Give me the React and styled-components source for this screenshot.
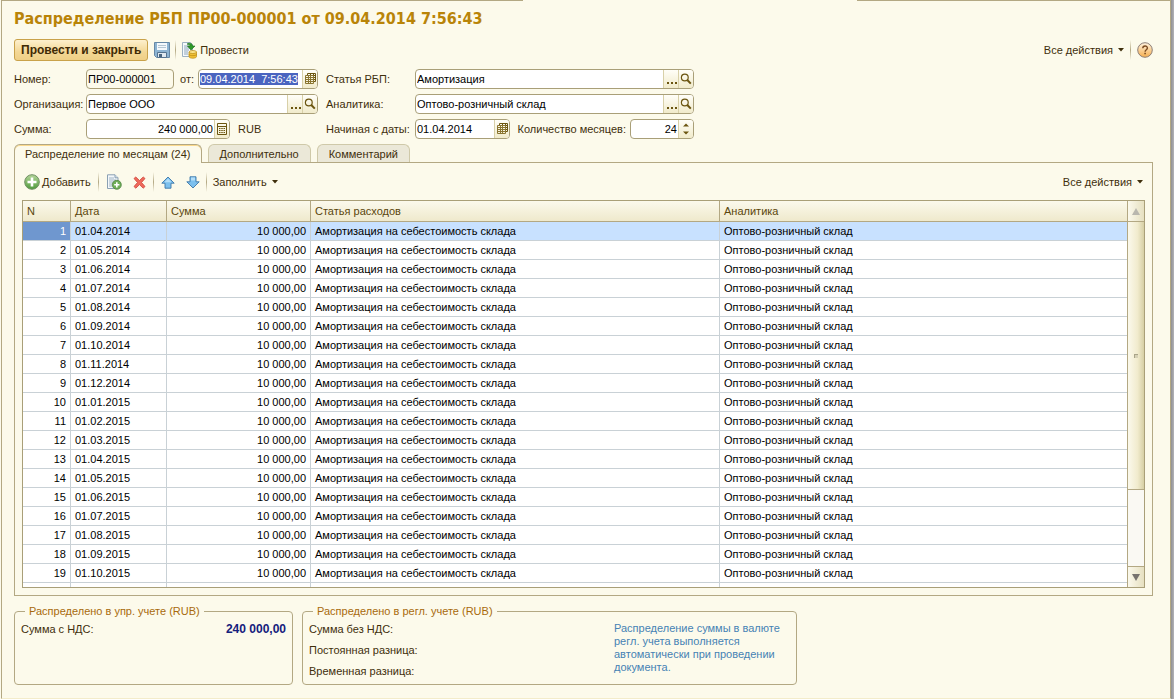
import { useEffect, useRef } from 'react'
import styled, { createGlobalStyle } from 'styled-components'

const GlobalStyle = createGlobalStyle`
* { box-sizing: border-box; }
body {
  margin: 0;
  background-color: #fcfaeb;
}
body, button, input, table {
  font-family: 'Liberation Sans', Arial, sans-serif;
  font-size: 11px;
  color: #3f2f0c;
}
`

const Window = styled.div`
display: flex;
height: 100vh;
min-width: 820px;
padding-left: 1px;
background-color: #fcfaeb;
`

const Page = styled.main`
flex: 1;
min-width: 0;
display: flex;
flex-direction: column;
padding: 0 17px 13px 12px;
border-left: 1px solid #b3a883;
border-right: 1px solid #b3a883;
border-bottom: 1px solid #f3eccb;
`

const Shadow = styled.div`
width: 3px;
background: linear-gradient(to right, #8f8f93, #b4b4b8);
`

const TopEdge = styled.div`
display: flex;
justify-content: space-between;
height: 1px;
margin: 0 -17px 0 -13px;
`

const Edge = styled.span`
width: ${({ side }) => (side === 'left' ? '522px' : '313px')};
background-color: #b3a883;
`

const Title = styled.h1`
margin: 8px 0 10px;
font-family: 'DejaVu Sans Condensed', Tahoma, sans-serif;
font-size: 16px;
line-height: 20px;
font-weight: bold;
color: #b98408;
`

const Toolbar = styled.div`
display: flex;
align-items: center;
height: 22px;
`

const Spacer = styled.div`
flex: 1;
`

const MainButton = styled.button`
height: 22px;
margin-right: 6px;
padding: 0 6px;
border: 1px solid #c9a24a;
border-radius: 3px;
background: linear-gradient(#fdf0cd, #f3d794 60%, #efcf86);
font-size: 12px;
font-weight: bold;
color: #3f2a05;
`

const ToolButton = styled.button`
display: flex;
align-items: center;
gap: 2px;
padding: 0;
border: none;
background: none;
white-space: nowrap;
svg { display: block; }
`

const MenuButton = styled(ToolButton)`
gap: 5px;
`

const IconGroup = styled.div`
display: flex;
align-items: center;
gap: 11px;
`

const Separator = styled.span`
width: 1px;
height: 20px;
margin: 0 ${({ gap }) => gap || 6}px;
background: linear-gradient(#fcfaeb, #b3a883 50%, #fcfaeb);
`

const Form = styled.form`
display: grid;
grid-template-columns: 72px 232px 97px 279px;
row-gap: 5px;
align-items: center;
margin-top: 8px;
`

const Label = styled.label`
white-space: nowrap;
padding-left: ${({ indent }) => (indent ? 8 : 0)}px;
`

const FieldGroup = styled.div`
display: flex;
align-items: center;
justify-content: ${({ spread }) => (spread ? 'space-between' : 'flex-start')};
gap: ${({ gap }) => gap || 0}px;
`

const Field = styled.div`
display: flex;
width: ${({ width }) => (width ? `${width}px` : '100%')};
height: 20px;
overflow: hidden;
border: 1px solid #a99f78;
border-radius: 4px;
background-color: ${({ plain }) => (plain ? '#fcfaeb' : '#ffffff')};
`

const Input = styled.input`
flex: 1;
width: 0;
min-width: 0;
padding: 0 1px;
border: none;
outline: none;
background: none;
color: #000;
text-align: ${({ right }) => (right ? 'right' : 'left')};
&::selection {
  background-color: #4a64c0;
  color: #ffffff;
}
`

const FieldButton = styled.button`
display: flex;
align-items: center;
justify-content: center;
width: 15px;
padding: 0;
border: none;
border-left: 1px solid #d8d0a8;
background: linear-gradient(#fffef8, #f1ebcb);
svg { display: block; }
`

const Tabs = styled.div`
display: flex;
align-items: flex-end;
gap: 6px;
height: 19px;
margin: 5px 0 -1px;
z-index: 1;
`

const Tab = styled.button`
height: ${({ active }) => (active ? 19 : 18)}px;
margin-bottom: ${({ active }) => (active ? 0 : 1)}px;
padding: 0 ${({ active }) => (active ? 10 : 11)}px;
border: 1px solid ${({ active }) => (active ? '#b3a883' : '#cfc9a9')};
border-bottom: none;
border-radius: 6px 6px 0 0;
background-color: ${({ active }) => (active ? '#fcfaeb' : '#ebe8d8')};
box-shadow: ${({ active }) => (active ? 'inset 0 1px 0 #fbd98d' : 'none')};
white-space: nowrap;
`

const Panel = styled.section`
flex: 1;
min-height: 0;
display: flex;
flex-direction: column;
padding: 8px 7px 7px;
border: 1px solid #b3a883;
`

const PanelToolbar = styled(Toolbar)`
padding: 0 2px;
margin-bottom: 7px;
`

const Grid = styled.div`
flex: 1;
min-height: 0;
display: flex;
border: 1px solid #a99f78;
background-color: #ffffff;
`

const TableClip = styled.div`
flex: 1;
min-width: 0;
overflow: hidden;
`

const Table = styled.table`
width: 100%;
table-layout: fixed;
border-collapse: separate;
border-spacing: 0;
color: #000;
`

const HeadCell = styled.th`
width: ${({ width }) => (width ? `${width}px` : 'auto')};
height: 21px;
padding: 0 4px;
border-right: 1px solid #b3a883;
border-bottom: 1px solid #b3a883;
background: linear-gradient(#fbf9ec, #efe9cc);
font-weight: normal;
text-align: left;
color: #5a460c;
&:last-child { border-right: none; }
`

const Row = styled.tr`
background-color: ${({ selected }) => (selected ? '#c8e1ff' : '#ffffff')};
`

const Cell = styled.td`
height: 19px;
padding: 0 4px;
border-right: 1px solid #c9d1d6;
border-bottom: 1px solid #c9d1d6;
text-align: ${({ right }) => (right ? 'right' : 'left')};
white-space: nowrap;
&:last-child { border-right: none; }
`

const NumberCell = styled(Cell)`
text-align: right;
${({ selected }) => selected && 'background-color: #6f97cf; color: #ffffff;'}
`

const ScrollBar = styled.div`
display: flex;
flex-direction: column;
width: 17px;
border-left: 1px solid #b3a883;
background-color: #faf9f3;
`

const ScrollButton = styled.button`
display: flex;
align-items: center;
justify-content: center;
height: 21px;
padding: 0;
border: none;
background: linear-gradient(to right, #fbf9ec, #e6e0c0);
border-bottom: ${({ down }) => (down ? 'none' : '1px solid #b3a883')};
border-top: ${({ down }) => (down ? '1px solid #b3a883' : 'none')};
`

const ScrollTrack = styled.div`
flex: 1;
`

const ScrollThumb = styled.div`
display: flex;
align-items: center;
justify-content: center;
height: 78%;
border-bottom: 1px solid #b3a883;
background: linear-gradient(to right, #fbf9ec, #f1ebcd 60%, #d6cfa5);
`

const Grip = styled.span`
width: 4px;
height: 4px;
border-top: 1px solid #a9a489;
border-left: 1px solid #a9a489;
background-color: #d6d1b6;
`

const Totals = styled.div`
display: flex;
gap: 9px;
margin-top: 8px;
`

const Group = styled.fieldset`
display: flex;
justify-content: space-between;
width: ${({ width }) => width}px;
height: 81px;
margin: 0;
padding: 5px 6px 0;
border: 1px solid #b3a883;
border-radius: 4px;
`

const Legend = styled.legend`
margin-left: 4px;
padding: 0 4px;
line-height: 14px;
color: #a86a0c;
`

const Lines = styled.div`
display: flex;
flex-direction: column;
gap: 8px;
line-height: 13px;
`

const Amount = styled.output`
font-size: 12px;
line-height: 13px;
font-weight: bold;
color: #14207c;
`

const Note = styled.p`
width: 176px;
margin: -1px 0 0;
line-height: 13px;
color: #4682b4;
`

const Caret = () => (
    <svg width="6" height="4" viewBox="0 0 6 4"><path d="M0 0h6L3 3.5z" fill="#3f2f0c" /></svg>
)

const SaveIcon = () => (
    <svg width="16" height="16" viewBox="0 0 16 16">
        <path d="M.5 .5h15v15h-13l-2-2z" fill="#8db4d2" stroke="#6587a5" />
        <path d="M3 1h10v7H3z" fill="#f4f8fb" />
        <path d="M4 3.500h8M4 5.500h8" stroke="#b5c6d3" />
        <path d="M3.500 10.500h9v5h-9z" fill="#dfe9f0" stroke="#55738f" />
        <path d="M5 12h3v3H5z" fill="#48647e" />
    </svg>
)

const PostIcon = () => (
    <svg width="17" height="17" viewBox="0 0 17 17">
        <path d="M1.500 .5h8l2 2v12h-10z" fill="#f5f9fc" stroke="#9db1c2" />
        <path d="M3 4h5M3 6h6M3 8h5M3 10h4M3 12h4" stroke="#8ea6bb" />
        <path d="M6.500 1.500c3-.8 5 .2 5 2.500H14l-4 4-3.600-4H9c0-1.200-1-1.800-2.500-1.500z" fill="#2f9a2a" stroke="#1b6d1a" strokeWidth=".6" />
        <path d="M8 10v4.500c0 2.300 7.500 2.300 7.500 0V10z" fill="#f0c136" stroke="#b8860f" strokeWidth=".7" />
        <path d="M8 12.300c0 1.800 7.500 1.800 7.500 0" fill="none" stroke="#b8860f" strokeWidth=".7" />
        <ellipse cx="11.750" cy="10" rx="3.750" ry="1.500" fill="#fbe48a" stroke="#b8860f" strokeWidth=".7" />
    </svg>
)

const HelpIcon = () => (
    <svg width="16" height="16" viewBox="0 0 16 16">
        <defs>
            <linearGradient id="help" x1="0" y1="0" x2="0" y2="1">
                <stop offset="0" stopColor="#fff3df" />
                <stop offset="1" stopColor="#f6ae4e" />
            </linearGradient>
        </defs>
        <circle cx="8" cy="8" r="7.300" fill="url(#help)" stroke="#8d7f78" />
        <path d="M5.800 6.300c0-3 4.600-2.900 4.600-.3C10.400 7.800 8.100 7.600 8.100 9.700" fill="none" stroke="#7a4a20" strokeWidth="1.400" />
        <path d="M7.300 10.800h1.600v1.500H7.300z" fill="#7a4a20" />
    </svg>
)

const AddIcon = () => (
    <svg width="16" height="16" viewBox="0 0 16 16">
        <defs>
            <linearGradient id="add" x1="0" y1="0" x2="0" y2="1">
                <stop offset="0" stopColor="#b5d69a" />
                <stop offset="1" stopColor="#4f9a3c" />
            </linearGradient>
        </defs>
        <circle cx="8" cy="8" r="7.300" fill="url(#add)" stroke="#6f8f62" />
        <path d="M8 3.500v9M3.500 8h9" stroke="#ffffff" strokeWidth="2.600" />
    </svg>
)

const CopyIcon = () => (
    <svg width="16" height="16" viewBox="0 0 16 16">
        <path d="M1.500 .8h7.500l3 3v10.700H1.500z" fill="#f3f7fa" stroke="#8aa0b3" />
        <path d="M9 .8v3h3" fill="#d8e3ec" stroke="#8aa0b3" />
        <path d="M3 4h5M3 6h7M3 8h5M3 10h3M3 12h3" stroke="#9fb3c4" />
        <circle cx="10.800" cy="10.800" r="4.500" fill="#6fae58" stroke="#4d8140" strokeWidth=".8" />
        <path d="M10.800 8.200v5.200M8.200 10.800h5.200" stroke="#ffffff" strokeWidth="1.600" />
    </svg>
)

const DeleteIcon = () => (
    <svg width="13" height="13" viewBox="0 0 13 13">
        <path d="M1 2.500L2.800 1 6.500 4.500 10.200 1 12 2.500 8.500 6.500 12 10.500 10.200 12.200 6.500 8.600 2.800 12.200 1 10.500 4.500 6.500z" fill="#ee6a5c" stroke="#cf4238" strokeWidth=".8" />
    </svg>
)

const ArrowIcon = ({ down }) => (
    <svg width="14" height="13" viewBox="0 0 14 13">
        <path
            d={down ? 'M4 .8h6v5h3.200L7 12 .8 5.800H4z' : 'M4 12.200h6v-5h3.200L7 1 .8 7.200H4z'}
            fill="#7cc0ee"
            stroke="#3b76a8"
            strokeWidth=".9"
        />
        <path d={down ? 'M5 1.500h4v3H5z' : 'M7 2.500L3.500 6.200h7z'} fill="#b4def8" />
    </svg>
)

const CalendarIcon = () => (
    <svg width="11" height="12" viewBox="0 0 11 12">
        <path d="M2.500 2V.5h8v8H9" fill="none" stroke="#6b5510" />
        <path d="M5.500 1v1M8.500 1v2M9 2.500h1M9 4.500h1M9 6.500h1" stroke="#6b5510" />
        <path d="M.5 2.500h8v8h-8zM3.500 3v7M5.500 3v7M1 4.500h7M1 6.500h7M1 8.500h7" fill="none" stroke="#8a7530" />
    </svg>
)

const CalculatorIcon = () => (
    <svg width="10" height="12" viewBox="0 0 10 12">
        <path d="M.5 .5h9v11h-9zM1 3.500h8" fill="none" stroke="#6b5510" />
        <path d="M2 5.500h6M2 7.500h6M2 9.500h6" stroke="#6b5510" strokeDasharray="1.500 .75" />
    </svg>
)

const SearchIcon = () => (
    <svg width="12" height="12" viewBox="0 0 12 12">
        <circle cx="4.800" cy="4.500" r="3.400" fill="none" stroke="#6b5510" strokeWidth="1.200" />
        <path d="M7.300 7l3.500 3.600" stroke="#6b5510" strokeWidth="2" />
    </svg>
)

const DotsIcon = () => (
    <svg width="11" height="12" viewBox="0 0 11 12">
        <path d="M1 9h2v2H1zM5 9h2v2H5zM9 9h2v2H9z" fill="#6b5510" />
    </svg>
)

const SpinIcon = () => (
    <svg width="6" height="12" viewBox="0 0 6 12">
        <path d="M0 3.500L3 .5l3 3zM0 8.500l3 3 3-3z" fill="#6b5510" />
    </svg>
)

const ScrollArrow = ({ down }) => (
    <svg width="8" height="7" viewBox="0 0 8 7">
        <path d={down ? 'M0 0h8L4 7z' : 'M0 7h8L4 0z'} fill={down ? '#77736f' : '#b9b7ae'} />
    </svg>
)

// monthly split starts in April 2014
const rows = Array.from({ length: 19 }, (_, i) => {
    const month = String(((i + 3) % 12) + 1).padStart(2, '0')
    const year = 2014 + Math.floor((i + 3) / 12)
    return { n: i + 1, date: `01.${month}.${year}` }
})

const LookupField = ({ id, value }) => (
    <Field>
        <Input id={id} defaultValue={value} />
        <FieldButton type="button" aria-label="Выбрать"><DotsIcon /></FieldButton>
        <FieldButton type="button" aria-label="Открыть"><SearchIcon /></FieldButton>
    </Field>
)

const AllActions = () => (
    <MenuButton type="button">Все действия <Caret /></MenuButton>
)

const App = () => {

    const dateRef = useRef(null)

    useEffect(() => {
        dateRef.current.focus()
        dateRef.current.select()
    }, [])

    return (
        <Window>
            <GlobalStyle />
            <Page>
                <TopEdge><Edge side="left" /><Edge side="right" /></TopEdge>
                <Title>Распределение РБП ПР00-000001 от 09.04.2014 7:56:43</Title>

                <Toolbar>
                    <MainButton type="button">Провести и закрыть</MainButton>
                    <ToolButton type="button" aria-label="Записать"><SaveIcon /></ToolButton>
                    <Separator gap={5} />
                    <ToolButton type="button"><PostIcon />Провести</ToolButton>
                    <Spacer />
                    <AllActions />
                    <Separator />
                    <ToolButton type="button" aria-label="Справка"><HelpIcon /></ToolButton>
                </Toolbar>

                <Form>
                    <Label htmlFor="number">Номер:</Label>
                    <FieldGroup spread>
                        <Field width={88} plain><Input id="number" defaultValue="ПР00-000001" /></Field>
                        <FieldGroup gap={4}>
                            <Label htmlFor="date">от:</Label>
                            <Field width={120}>
                                <Input id="date" ref={dateRef} defaultValue="09.04.2014  7:56:43" />
                                <FieldButton type="button" aria-label="Календарь"><CalendarIcon /></FieldButton>
                            </Field>
                        </FieldGroup>
                    </FieldGroup>
                    <Label htmlFor="item" indent>Статья РБП:</Label>
                    <LookupField id="item" value="Амортизация" />

                    <Label htmlFor="org">Организация:</Label>
                    <LookupField id="org" value="Первое ООО" />
                    <Label htmlFor="analytics" indent>Аналитика:</Label>
                    <LookupField id="analytics" value="Оптово-розничный склад" />

                    <Label htmlFor="sum">Сумма:</Label>
                    <FieldGroup gap={8}>
                        <Field width={144}>
                            <Input id="sum" right defaultValue="240 000,00" />
                            <FieldButton type="button" aria-label="Калькулятор"><CalculatorIcon /></FieldButton>
                        </Field>
                        <span>RUB</span>
                    </FieldGroup>
                    <Label htmlFor="start" indent>Начиная с даты:</Label>
                    <FieldGroup spread>
                        <Field width={95}>
                            <Input id="start" defaultValue="01.04.2014" />
                            <FieldButton type="button" aria-label="Календарь"><CalendarIcon /></FieldButton>
                        </Field>
                        <FieldGroup gap={4}>
                            <Label htmlFor="months">Количество месяцев:</Label>
                            <Field width={64}>
                                <Input id="months" right defaultValue="24" />
                                <FieldButton type="button" aria-label="Изменить"><SpinIcon /></FieldButton>
                            </Field>
                        </FieldGroup>
                    </FieldGroup>
                </Form>

                <Tabs role="tablist">
                    <Tab type="button" role="tab" active>Распределение по месяцам (24)</Tab>
                    <Tab type="button" role="tab">Дополнительно</Tab>
                    <Tab type="button" role="tab">Комментарий</Tab>
                </Tabs>

                <Panel>
                    <PanelToolbar>
                        <ToolButton type="button"><AddIcon />Добавить</ToolButton>
                        <Separator gap={7} />
                        <IconGroup>
                            <ToolButton type="button" aria-label="Скопировать"><CopyIcon /></ToolButton>
                            <ToolButton type="button" aria-label="Удалить"><DeleteIcon /></ToolButton>
                        </IconGroup>
                        <Separator gap={7} />
                        <IconGroup>
                            <ToolButton type="button" aria-label="Вверх"><ArrowIcon /></ToolButton>
                            <ToolButton type="button" aria-label="Вниз"><ArrowIcon down /></ToolButton>
                        </IconGroup>
                        <Separator />
                        <MenuButton type="button">Заполнить <Caret /></MenuButton>
                        <Spacer />
                        <AllActions />
                    </PanelToolbar>

                    <Grid>
                        <TableClip>
                            <Table>
                                <thead>
                                    <tr>
                                        <HeadCell width={48}>N</HeadCell>
                                        <HeadCell width={96}>Дата</HeadCell>
                                        <HeadCell width={144}>Сумма</HeadCell>
                                        <HeadCell width={409}>Статья расходов</HeadCell>
                                        <HeadCell>Аналитика</HeadCell>
                                    </tr>
                                </thead>
                                <tbody>
                                    {rows.map((row) => (
                                        <Row key={row.n} selected={row.n === 1}>
                                            <NumberCell selected={row.n === 1}>{row.n}</NumberCell>
                                            <Cell>{row.date}</Cell>
                                            <Cell right>10 000,00</Cell>
                                            <Cell>Амортизация на себестоимость склада</Cell>
                                            <Cell>Оптово-розничный склад</Cell>
                                        </Row>
                                    ))}
                                    <Row><Cell /><Cell /><Cell /><Cell /><Cell /></Row>
                                </tbody>
                            </Table>
                        </TableClip>
                        <ScrollBar>
                            <ScrollButton type="button" aria-label="Прокрутить вверх"><ScrollArrow /></ScrollButton>
                            <ScrollTrack><ScrollThumb><Grip /></ScrollThumb></ScrollTrack>
                            <ScrollButton type="button" down aria-label="Прокрутить вниз"><ScrollArrow down /></ScrollButton>
                        </ScrollBar>
                    </Grid>
                </Panel>

                <Totals>
                    <Group width={279}>
                        <Legend>Распределено в упр. учете (RUB)</Legend>
                        <span>Сумма с НДС:</span>
                        <Amount>240 000,00</Amount>
                    </Group>
                    <Group width={495}>
                        <Legend>Распределено в регл. учете (RUB)</Legend>
                        <Lines>
                            <span>Сумма без НДС:</span>
                            <span>Постоянная разница:</span>
                            <span>Временная разница:</span>
                        </Lines>
                        <Note>Распределение суммы в валюте регл. учета выполняется автоматически при проведении документа.</Note>
                    </Group>
                </Totals>
            </Page>
            <Shadow />
        </Window>
    )
}

export default App
